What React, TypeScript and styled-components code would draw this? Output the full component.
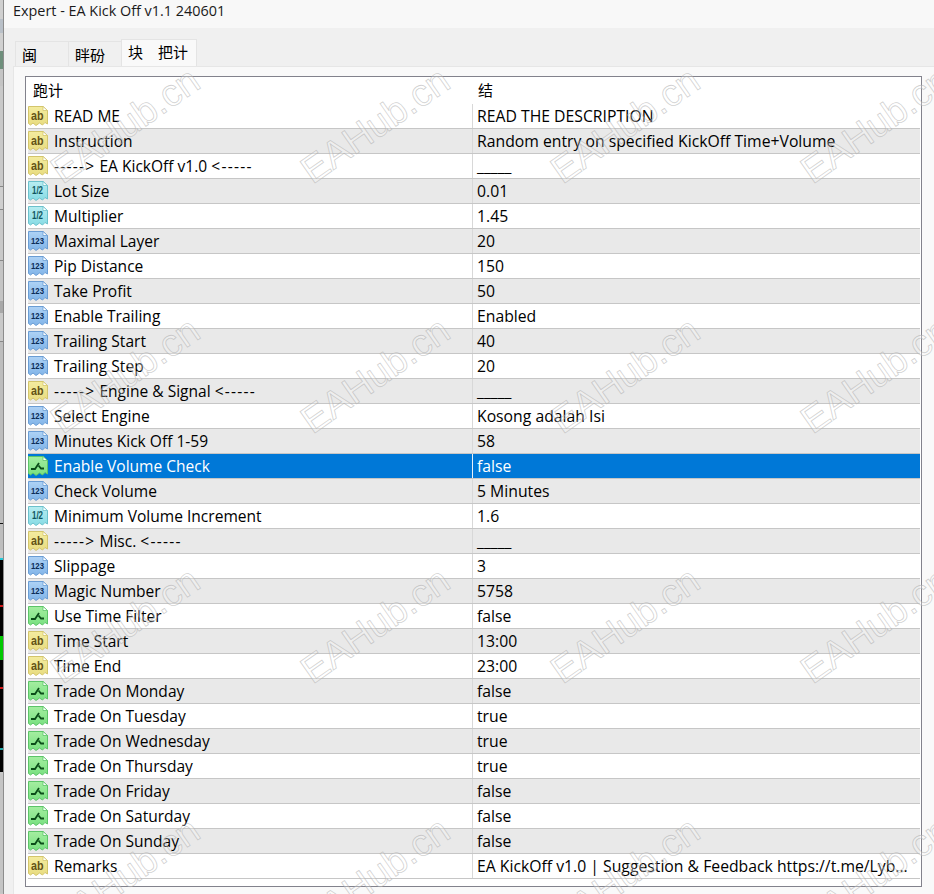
import React from 'react'
import styled, { createGlobalStyle } from 'styled-components'

type Kind = 'ab' | 'half' | 'int' | 'bool'

const rows: [Kind, string, string][] = [
  ['ab', 'READ ME', 'READ THE DESCRIPTION'],
  ['ab', 'Instruction', 'Random entry on specified KickOff Time+Volume'],
  ['ab', '-----> EA KickOff v1.0 <-----', '_____'],
  ['half', 'Lot Size', '0.01'],
  ['half', 'Multiplier', '1.45'],
  ['int', 'Maximal Layer', '20'],
  ['int', 'Pip Distance', '150'],
  ['int', 'Take Profit', '50'],
  ['int', 'Enable Trailing', 'Enabled'],
  ['int', 'Trailing Start', '40'],
  ['int', 'Trailing Step', '20'],
  ['ab', '-----> Engine & Signal <-----', '_____'],
  ['int', 'Select Engine', 'Kosong adalah Isi'],
  ['int', 'Minutes Kick Off 1-59', '58'],
  ['bool', 'Enable Volume Check', 'false'],
  ['int', 'Check Volume', '5 Minutes'],
  ['half', 'Minimum Volume Increment', '1.6'],
  ['ab', '-----> Misc. <-----', '_____'],
  ['int', 'Slippage', '3'],
  ['int', 'Magic Number', '5758'],
  ['bool', 'Use Time Filter', 'false'],
  ['ab', 'Time Start', '13:00'],
  ['ab', 'Time End', '23:00'],
  ['bool', 'Trade On Monday', 'false'],
  ['bool', 'Trade On Tuesday', 'true'],
  ['bool', 'Trade On Wednesday', 'true'],
  ['bool', 'Trade On Thursday', 'true'],
  ['bool', 'Trade On Friday', 'false'],
  ['bool', 'Trade On Saturday', 'false'],
  ['bool', 'Trade On Sunday', 'false'],
  ['ab', 'Remarks', 'EA KickOff v1.0 | Suggestion & Feedback https://t.me/Lyb...'],
]

const SELECTED = 14

// bits of the window behind, only a sliver shows on the left
const strip: [number, string][] = [
  [19, '#d0d0d0'], [14, '#b9c0c8'], [18, '#d0d0d0'], [18, '#6f8f7c'], [17, '#c4c4c4'],
  [100, '#c9c9c9'], [1, '#888'], [22, '#cfcfcf'], [1, '#888'], [50, '#c9c9c9'],
  [1, '#888'], [40, '#c4c4c4'], [12, '#a8a8a8'], [28, '#c9c9c9'], [1, '#888'],
  [181, '#bdbdbd'], [1, '#111'], [26, '#bdbdbd'], [8, '#c9c9c9'], [2, '#22c8d8'],
  [45, '#000'], [2, '#d01818'], [29, '#000'], [24, '#00c800'], [27, '#000'],
  [2, '#d01818'], [59, '#000'], [2, '#22a8a8'], [22, '#000'], [2, '#c8c8c8'],
  [119, '#c4c4c4'],
]

const palette: Record<Kind, { from: string; to: string; edge: string; ink: string }> = {
  ab: { from: '#f4ec9f', to: '#e8dc80', edge: '#d3c56c', ink: '#625216' },
  half: { from: '#b8edf1', to: '#86dbe4', edge: '#6cc1cc', ink: '#0f5560' },
  int: { from: '#aed2f5', to: '#80b4e8', edge: '#6a9dd4', ink: '#0b2c58' },
  bool: { from: '#a4eea0', to: '#78e080', edge: '#5cc468', ink: '#0a4d18' },
}

const GlobalStyle = createGlobalStyle`
  html, body {
    margin: 0;
    padding: 0;
    background: #f0f0f0;
    overflow: hidden;
  }
`

const Desktop = styled.div`
  position: relative;
  width: 934px;
  height: 894px;
  display: flex;
  overflow: hidden;
  font-family: 'Open Sans', 'Noto Sans', 'Noto Sans CJK SC', sans-serif;
  font-size: 15.75px;
  color: #000;
`

const BehindStrip = styled.div`
  width: 3px;
  flex: none;
  display: flex;
  flex-direction: column;
  background: #c8c8c8;
  border-right: 1px solid #8c8c8c;
`

const StripPart = styled.div<{ $h: number; $bg: string }>`
  height: ${p => p.$h}px;
  flex: none;
  background: ${p => p.$bg};
`

const Window = styled.div`
  flex: 1;
  display: flex;
  flex-direction: column;
  min-width: 0;
`

const TitleBar = styled.div`
  height: 28px;
  flex: none;
  box-sizing: border-box;
  padding: 0 0 8px 9px;
  display: flex;
  align-items: center;
  background: #f8f8f8;
  font-size: 14.4px;
  color: #1a1a1a;
`

const Body = styled.div`
  flex: 1;
  padding: 11px 0 0 9px;
  background: #f0f0f0;
  display: flex;
  flex-direction: column;
`

const Tabs = styled.div`
  height: 27px;
  flex: none;
  display: flex;
  align-items: flex-end;
  padding-left: 3px;
`

const Tab = styled.div<{ $active?: boolean; $w: number }>`
  width: ${p => p.$w}px;
  height: ${p => (p.$active ? 27 : 25)}px;
  box-sizing: border-box;
  padding: 0 0 ${p => (p.$active ? 3 : 0)}px 6px;
  display: flex;
  align-items: center;
  white-space: pre;
  font-family: 'Noto Sans CJK SC', sans-serif;
  font-size: 15px;
  background: ${p => (p.$active ? '#f9f9f9' : '#f0f0f0')};
  border: 1px solid #e4e4e4;
  border-bottom: none;
  margin-left: -1px;
`

const Panel = styled.div`
  flex: 1;
  background: #f9f9f9;
  border-top: 1px solid #e6e6e6;
  border-left: 1px solid #e6e6e6;
  padding: 9px 0 0 11px;
`

const Table = styled.div`
  width: 897px;
  height: 811px;
  box-sizing: border-box;
  background: #fff;
  border: 1px solid #82828c;
  padding: 0 0 0 2px;
`

const RowLine = styled.div<{ $head?: boolean; $alt?: boolean; $sel?: boolean }>`
  display: grid;
  grid-template-columns: 444px 1fr;
  height: ${p => (p.$head ? 27 : 25)}px;
  width: 892px;
  box-sizing: border-box;
  background: ${p => (p.$sel ? '#0078d7' : p.$alt ? '#e9e9e9' : '#fff')};
  color: ${p => (p.$sel ? '#fff' : '#000')};
  border-bottom: ${p => (p.$head ? 'none' : '1px solid #c6c6c6')};
`

const NameCell = styled.div`
  display: flex;
  align-items: center;
  gap: 6px;
  min-width: 0;
  white-space: pre;
  font-size: 15.55px;
`

const HeadCell = styled.div`
  display: flex;
  align-items: flex-start;
  padding: 2px 0 0 5px;
  font-family: 'Noto Sans CJK SC', sans-serif;
  font-size: 15px;
  line-height: 22px;

  & + & {
    padding-left: 6px;
  }
`

const ValueCell = styled.div<{ $sel?: boolean }>`
  display: flex;
  align-items: center;
  padding-left: 4px;
  white-space: pre;
  border-left: 1px solid ${p => (p.$sel ? '#e6f0fa' : '#d8d8d8')};
`

const Dashes = styled.span`
  letter-spacing: 1.25px;
`

const Watermarks = styled.div`
  position: absolute;
  inset: 0;
  display: grid;
  grid-template-columns: repeat(4, 250px);
  grid-auto-rows: 250px;
  pointer-events: none;
`

const Mark = styled.div`
  display: flex;
  align-items: center;
  justify-content: center;
  font-family: 'Liberation Sans', sans-serif;
  font-size: 38px;
  white-space: nowrap;
  color: rgba(255, 255, 255, 0.25);
  -webkit-text-stroke: 0.8px rgba(170, 170, 170, 0.55);
  transform: rotate(-35deg);
`

function ParamName({ text }: { text: string }) {
  const m = text.match(/^(-+>)(.*)(<-+)$/)
  if (!m) return <span>{text}</span>
  return (
    <span>
      <Dashes>{m[1]}</Dashes>
      {m[2]}
      <Dashes>{m[3]}</Dashes>
    </span>
  )
}

const glyphs = {
  ab: { label: 'ab', size: 13, y: 13.5, fit: 12.5, x: 3 },
  half: { label: '1/2', size: 10, y: 12.5, fit: 11, x: 4 },
  int: { label: '123', size: 9, y: 13, fit: 13, x: 3 },
}

function TypeIcon({ kind }: { kind: Kind }) {
  const c = palette[kind]
  const id = `g-${kind}`
  return (
    <svg width="20" height="20" viewBox="0 0 20 20" style={{ flex: 'none' }}>
      <defs>
        <linearGradient id={id} x1="0" y1="0" x2="0" y2="1">
          <stop offset="0" stopColor={c.from} />
          <stop offset="1" stopColor={c.to} />
        </linearGradient>
      </defs>
      <path
        d="M0.5 0.5H15L19.5 4.5V18L17 16.5L14.5 19L11.5 17L8 19.5L5 17L2.5 19L0.5 17.5V0.5Z"
        fill={`url(#${id})`}
        stroke={c.edge}
        strokeWidth="1"
      />
      <path d="M15 0.5V4.5H19.5Z" fill="#fff" stroke={c.edge} strokeWidth="0.8" />
      {kind === 'bool' ? (
        <g fill="none" stroke={c.ink} strokeWidth="1.8">
          <path d="M3 13H7L11 7" />
          <path d="M10.5 9.5L13 12.5H16" />
        </g>
      ) : (
        <text
          x={glyphs[kind].x}
          y={glyphs[kind].y}
          textLength={glyphs[kind].fit}
          lengthAdjust="spacingAndGlyphs"
          fontFamily="'Liberation Sans', sans-serif"
          fontWeight="700"
          fontSize={glyphs[kind].size}
          fill={c.ink}
        >
          {glyphs[kind].label}
        </text>
      )}
    </svg>
  )
}

function App() {
  return (
    <Desktop>
      <GlobalStyle />
      <BehindStrip>
        {strip.map(([h, bg], i) => (
          <StripPart key={i} $h={h} $bg={bg} />
        ))}
      </BehindStrip>
      <Window>
        <TitleBar>Expert - EA Kick Off v1.1 240601</TitleBar>
        <Body>
          <Tabs>
            <Tab $w={54}>闽</Tab>
            <Tab $w={54}>眫砏</Tab>
            <Tab $w={76} $active>{'块　把计'}</Tab>
          </Tabs>
          <Panel>
            <Table>
              <RowLine $head>
                <HeadCell>跑计</HeadCell>
                <HeadCell>结</HeadCell>
              </RowLine>
              {rows.map(([kind, name, value], i) => (
                <RowLine key={name} $alt={i % 2 === 1} $sel={i === SELECTED}>
                  <NameCell>
                    <TypeIcon kind={kind} />
                    <ParamName text={name} />
                  </NameCell>
                  <ValueCell $sel={i === SELECTED}>{value}</ValueCell>
                </RowLine>
              ))}
            </Table>
          </Panel>
        </Body>
      </Window>
      <Watermarks>
        {Array.from({ length: 16 }, (_, i) => (
          <Mark key={i}>EAHub.cn</Mark>
        ))}
      </Watermarks>
    </Desktop>
  )
}

export default App
